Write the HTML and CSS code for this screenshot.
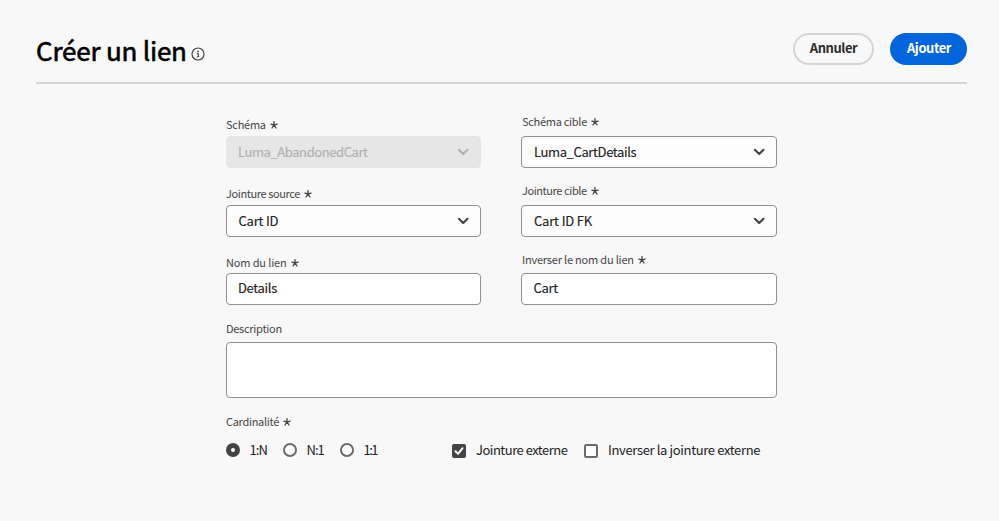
FILE: index.html
```html
<!DOCTYPE html>
<html lang="fr">
<head>
<meta charset="utf-8">
<title>Créer un lien</title>
<link rel="stylesheet" href="styles.css">
</head>
<body>
<svg class="defs" width="0" height="0">
  <symbol id="chevron" viewBox="0 0 12 8"><path d="M1.9 1.8 6.2 6.1l4.3-4.3" fill="none" stroke="currentColor" stroke-width="2.1" stroke-linecap="round" stroke-linejoin="round"/></symbol>
  <symbol id="star" viewBox="0 0 8 8"><path d="M4 4V.7M4 4l3.1-.8M4 4l2 3M4 4 2 7M4 4 .9 3.2" fill="none" stroke="currentColor" stroke-width="1.35" stroke-linecap="round"/></symbol>
</svg>
<header class="header">
  <h1 class="title">Créer un lien</h1>
  <svg class="info" viewBox="0 0 14 14"><circle cx="7" cy="7" r="6" fill="none" stroke="currentColor" stroke-width="1.2"/><circle cx="7" cy="4.3" r=".9" fill="currentColor"/><path d="M6 6.4h1.2v3.3M6 9.7h2.2" fill="none" stroke="currentColor" stroke-width="1.1"/></svg>
  <div class="actions">
    <button class="btn cancel">Annuler</button>
    <button class="btn primary">Ajouter</button>
  </div>
</header>
<main class="form">
  <div class="grid">
    <div class="field first">
      <div class="label"><span class="l1">Schéma</span><svg class="star"><use href="#star"/></svg></div>
      <div class="control disabled"><span class="v1">Luma_AbandonedCart</span><svg class="chevron"><use href="#chevron"/></svg></div>
    </div>
    <div class="field right first">
      <div class="label"><span class="l2">Schéma cible</span><svg class="star"><use href="#star"/></svg></div>
      <div class="control select"><span class="v2">Luma_CartDetails</span><svg class="chevron"><use href="#chevron"/></svg></div>
    </div>
    <div class="field">
      <div class="label"><span class="l3">Jointure source</span><svg class="star"><use href="#star"/></svg></div>
      <div class="control select"><span class="v3">Cart ID</span><svg class="chevron"><use href="#chevron"/></svg></div>
    </div>
    <div class="field right">
      <div class="label"><span class="l4">Jointure cible</span><svg class="star"><use href="#star"/></svg></div>
      <div class="control select"><span class="v4">Cart ID FK</span><svg class="chevron"><use href="#chevron"/></svg></div>
    </div>
    <div class="field">
      <div class="label"><span class="l5">Nom du lien</span><svg class="star"><use href="#star"/></svg></div>
      <div class="control input"><span class="v5">Details</span></div>
    </div>
    <div class="field right">
      <div class="label"><span class="l6">Inverser le nom du lien</span><svg class="star"><use href="#star"/></svg></div>
      <div class="control input"><span class="v6">Cart</span></div>
    </div>
  </div>
  <div class="label description"><span class="l7">Description</span></div>
  <div class="textarea"></div>
  <div class="label cardinality"><span class="l8">Cardinalité</span><svg class="star"><use href="#star"/></svg></div>
  <div class="options">
    <div class="radios">
      <div class="option"><span class="radio checked"></span><span class="o1">1:N</span></div>
      <div class="option"><span class="radio"></span><span class="o2">N:1</span></div>
      <div class="option"><span class="radio"></span><span class="o3">1:1</span></div>
    </div>
    <div class="option outer"><svg class="box" viewBox="0 0 14 14"><rect width="14" height="14" rx="2" fill="#444"/><path d="M3.5 7.3 6 9.8l4.6-5.6" fill="none" stroke="#fff" stroke-width="2" stroke-linecap="round" stroke-linejoin="round"/></svg><span class="o4">Jointure externe</span></div>
    <div class="option inverse"><svg class="box" viewBox="0 0 14 14"><rect x="1" y="1" width="12" height="12" rx="1.2" fill="#fff" stroke="#6b6b6b" stroke-width="2"/></svg><span class="o5">Inverser la jointure externe</span></div>
  </div>
</main>
</body>
</html>
```
FILE: styles.css
```css
* { box-sizing: border-box; }
body {
  margin: 0;
  height: 521px;
  overflow: hidden;
  background: #f8f8f8;
  color: #222;
  font-family: "Noto Sans CJK JP", "Noto Sans", sans-serif;
  font-size: 13px;
}
.defs { display: block; }
span, h1 { white-space: nowrap; }
.header {
  display: flex;
  margin: 0 32px 0 36px;
  height: 84px;
  border-bottom: 2px solid #d5d5d5;
}
.title {
  margin: 30px 0 0;
  width: 154px;
  font-size: 26px;
  line-height: 40px;
  font-weight: 400;
  letter-spacing: -0.2px;
  color: #000;
  -webkit-text-stroke: 0.6px #000;
}
.info { width: 14px; height: 14px; margin: 47px 0 0 1px; color: #444; }
.actions { display: flex; gap: 16px; margin: 33px 0 0 auto; height: 32px; }
.btn {
  height: 32px;
  padding: 0 0 2px;
  border-radius: 16px;
  font: 700 13px/26px "Noto Sans CJK JP", "Noto Sans", sans-serif;
  letter-spacing: -0.45px;
}
.cancel { width: 81px; border: 2px solid #d5d5d5; background: #f8f8f8; color: #2c2c2c; }
.primary { width: 77px; border: 0; background: #0265dc; color: #fff; padding-left: 1px; }
.form { width: 551px; margin: 32px 0 0 226px; }
.grid {
  display: grid;
  grid-template-columns: 255.4px 255.6px;
  column-gap: 40px;
  justify-content: space-between;
  grid-template-rows: 68.5px 68.5px 52px;
}
.label {
  display: flex;
  align-items: center;
  height: 20px;
  padding-bottom: 3px;
  font-size: 11px;
  line-height: 16px;
  color: #464646;
}
.right .label { padding-bottom: 9px; padding-left: 0.5px; }
.first .label { padding-bottom: 5px; }
.right.first .label { padding-bottom: 11px; }
.star { width: 8px; height: 8px; margin: 2px 0 0 4.3px; }
.control {
  display: flex;
  align-items: center;
  height: 32px;
  padding: 0 11.5px;
  border: 1px solid #909090;
  border-radius: 4px;
  background: #fdfdfd;
  line-height: 20px;
  -webkit-text-stroke: 0.15px currentColor;
}
.input { background: #fff; padding: 0 11px 2px; }
.disabled { background: #e6e6e6; border-color: #e6e6e6; color: #b1b1b1; padding: 0 11px; }
.chevron { width: 12px; height: 8px; margin-left: auto; color: #444; }
.disabled .chevron { color: #b1b1b1; }
.l1 { letter-spacing: -0.25px; }
.l2 { letter-spacing: -0.28px; }
.l3 { letter-spacing: -0.4px; }
.l4 { letter-spacing: -0.4px; }
.l5 { letter-spacing: -0.15px; }
.l6 { letter-spacing: -0.2px; }
.l7 { letter-spacing: -0.27px; }
.l8 { letter-spacing: -0.3px; }
.v1 { letter-spacing: -0.42px; }
.v2 { letter-spacing: -0.37px; }
.v3 { letter-spacing: -0.2px; }
.v4 { letter-spacing: -0.15px; }
.v5 { letter-spacing: -0.33px; }
.v6 { letter-spacing: -0.25px; }
.o1 { letter-spacing: -0.9px; }
.o2 { letter-spacing: -1px; }
.o3 { letter-spacing: -1.5px; }
.o4 { letter-spacing: -0.5px; }
.o5 { letter-spacing: -0.35px; }
.description { margin-top: 13px; height: 22px; }
.textarea { height: 56px; margin-top: 2px; border: 1px solid #909090; border-radius: 4px; background: #fff; }
.cardinality { margin-top: 14px; }
.options { display: flex; margin-top: 8px; height: 20px; line-height: 20px; }
.radios { display: flex; width: 226px; }
.radios .option { width: 57px; }
.option { display: flex; align-items: center; }
.radio { width: 14px; height: 14px; margin-right: 9.5px; border: 2px solid #6b6b6b; border-radius: 50%; background: #fff; }
.radio.checked { border: 5px solid #444; }
.outer { width: 132px; }
.box { width: 14px; height: 14px; margin: 1px 10px 0 0; }
```
